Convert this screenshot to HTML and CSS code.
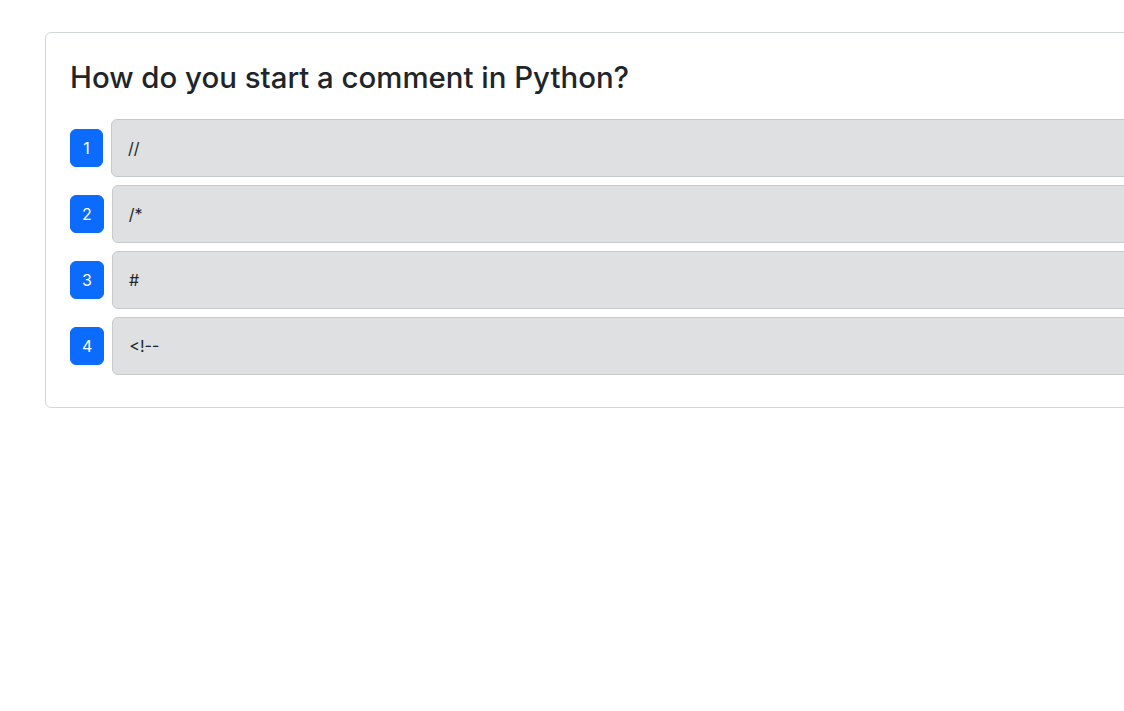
FILE: index.html
```html
<!DOCTYPE html>
<html lang="en">
<head>
<meta charset="utf-8">
<title>Quiz</title>
<link rel="stylesheet" href="styles.css">
</head>
<body>
<div class="page">
  <div class="card">
    <h3 class="question">How do you start a comment in Python?</h3>
    <div class="answers">
      <div class="answer"><span class="num">1</span><div class="option">//</div></div>
      <div class="answer"><span class="num">2</span><div class="option">/*</div></div>
      <div class="answer"><span class="num">3</span><div class="option">#</div></div>
      <div class="answer"><span class="num">4</span><div class="option">&lt;!--</div></div>
    </div>
  </div>
</div>
</body>
</html>
```
FILE: styles.css
```css
html, body {
  margin: 0;
  padding: 0;
  background: #fff;
}
body {
  font-family: Inter, "Liberation Sans", sans-serif;
  color: #212529;
  font-size: 16px;
  line-height: 1.5;
}
.page {
  padding: 32px 0 0 45px;
  overflow: hidden;
}
.card {
  width: 1200px;
  border: 1px solid #d3d6d9;
  border-radius: 6px;
  padding: 24px 24px 32px;
  box-sizing: border-box;
}
.question {
  margin: 3px 0 24px 0;
  font-size: 29.4px;
  font-weight: 500;
  line-height: 1.2;
}
.answers {
  display: flex;
  flex-direction: column;
  gap: 8px;
}
.answer {
  display: flex;
  align-items: center;
  gap: 8px;
}
.num {
  display: inline-block;
  background: #0b6bfc;
  color: #fff;
  border: 1px solid #0b6bfc;
  border-radius: 6px;
  padding: 6px 11px;
  min-width: 9px;
  text-align: center;
  line-height: 24px;
}
.option {
  flex: 1;
  background: #dee0e2;
  border: 1px solid #c6cacd;
  border-radius: 6px;
  padding: 16px;
  line-height: 24px;
}
```
